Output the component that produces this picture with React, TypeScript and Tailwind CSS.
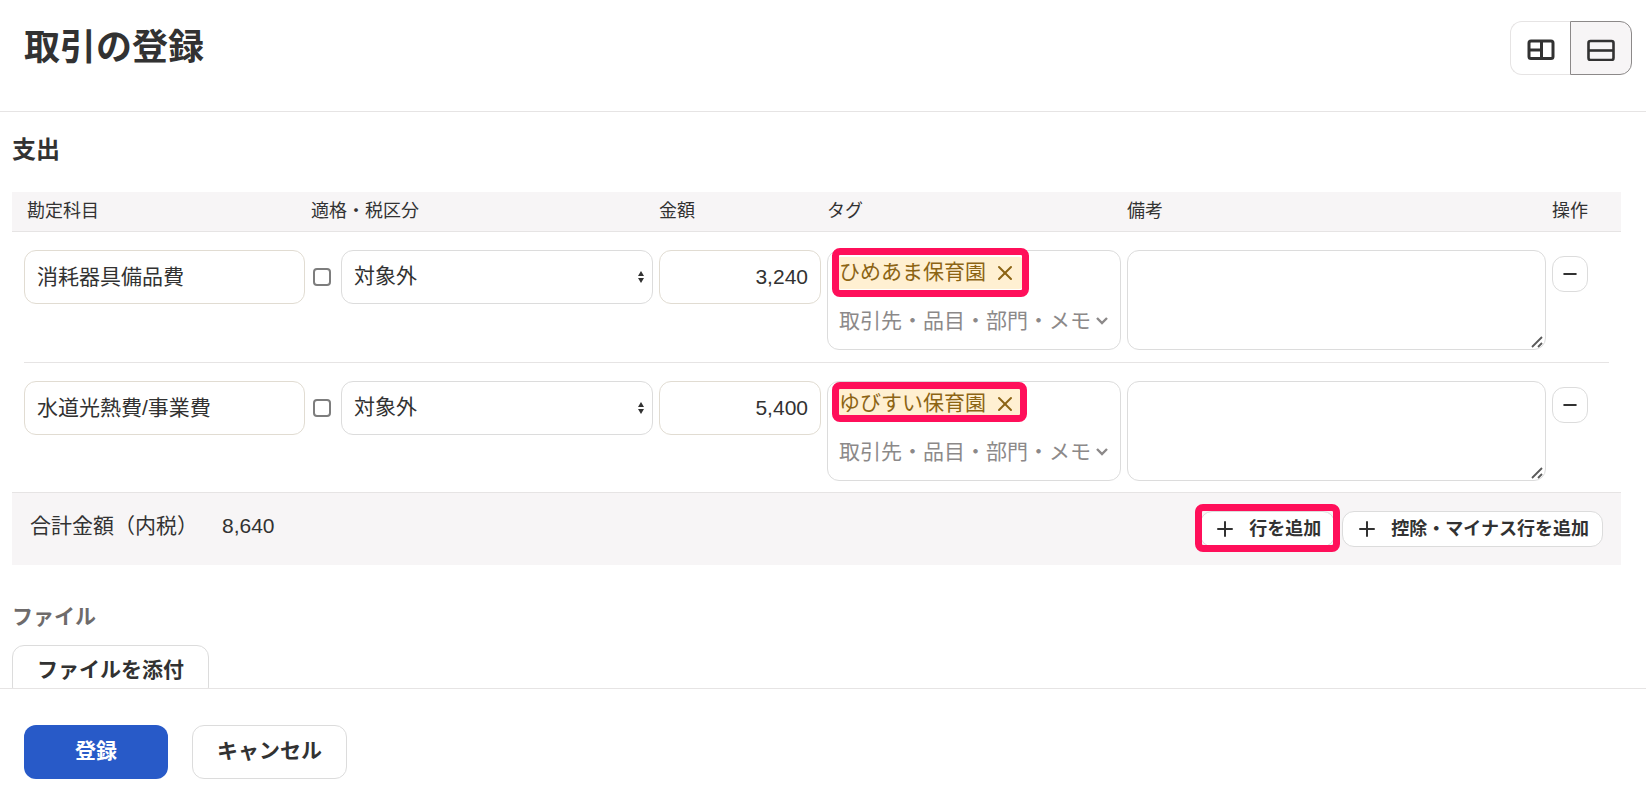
import { Minus, Plus, X } from 'lucide-react'

const rows = [
  {
    id: 1,
    account: '消耗器具備品費',
    tax: '対象外',
    amount: '3,240',
    tag: 'ひめあま保育園',
    frame: 'w-[197px] h-[49px] -top-[3px]',
  },
  {
    id: 2,
    account: '水道光熱費/事業費',
    tax: '対象外',
    amount: '5,400',
    tag: 'ゆびすい保育園',
    frame: 'w-[195px] h-10 top-0',
  },
]

const field = 'block h-[54px] w-full rounded-xl border bg-white px-3 text-[21px]'
const smallButton =
  'flex h-9 items-center gap-3 rounded-xl border border-[#dcdcdc] bg-white pr-[13px] pl-3 text-lg font-bold whitespace-nowrap'

function SplitIcon() {
  return (
    <svg width="28" height="22" viewBox="0 0 28 22" fill="none" stroke="#323232" strokeWidth="3">
      <rect x="2" y="2" width="24" height="17.5" rx="2" />
      <path d="M14.5 2v18" />
      <path d="M2 11h12" />
    </svg>
  )
}

function StackIcon() {
  return (
    <svg width="28" height="22" viewBox="0 0 28 22" fill="none" stroke="#323232" strokeWidth="2.6">
      <rect x="1.5" y="2" width="25" height="19" rx="2" />
      <path d="M2 11.5h24" />
    </svg>
  )
}

function SelectArrows() {
  return (
    <svg
      className="pointer-events-none absolute top-[21px] right-[9px]"
      width="6"
      height="12"
      viewBox="0 0 6 12"
      fill="#323232"
    >
      <path d="M3 0 6 5H0z" />
      <path d="M3 12 0 7h6z" />
    </svg>
  )
}

function Chevron() {
  return (
    <svg
      className="shrink-0"
      width="12"
      height="8"
      viewBox="0 0 12 8"
      fill="none"
      stroke="currentColor"
      strokeWidth="2.4"
    >
      <path d="m1 1 5 5 5-5" />
    </svg>
  )
}

function ResizeHandle() {
  return (
    <svg
      className="pointer-events-none absolute right-[3px] bottom-0.5"
      width="12"
      height="12"
      viewBox="0 0 12 12"
      fill="none"
      stroke="#5a5a5a"
      strokeWidth="1.8"
    >
      <path d="M1 11 11 1M7 11l4-4" />
    </svg>
  )
}

// Pink frame drawn over the parts that the guide points at
function Highlight({ className }: { className: string }) {
  return (
    <span
      className={`pointer-events-none absolute rounded-lg border-[7px] border-[#ff0f5a] ${className}`}
    />
  )
}

function EntryRow({ row, last }: { row: (typeof rows)[number]; last: boolean }) {
  return (
    <tr className="relative align-top">
      <td className="pt-[18px] pr-[3px] pl-3">
        <input
          aria-label="勘定科目"
          defaultValue={row.account}
          className={`${field} border-[#e1dcd2] pb-1`}
        />
      </td>
      <td className="px-[3px] pt-[18px]">
        <div className="flex items-center gap-2.5 pl-0.5">
          <input
            type="checkbox"
            aria-label="適格"
            className="size-[18px] shrink-0 appearance-none rounded border-2 border-[#7d7d7d] bg-white checked:bg-[#285ac8]"
          />
          <div className="relative flex-1">
            <select
              aria-label="税区分"
              defaultValue={row.tax}
              className={`${field} appearance-none border-[#dcdcdc] pb-0.5`}
            >
              <option>{row.tax}</option>
            </select>
            <SelectArrows />
          </div>
        </div>
      </td>
      <td className="px-[3px] pt-[18px]">
        <input
          aria-label="金額"
          defaultValue={row.amount}
          className={`${field} border-[#e1dcd2] text-right`}
        />
      </td>
      <td className={`px-[3px] pt-[18px] ${last ? 'pb-[11px]' : 'pb-[13px]'}`}>
        <div className="relative h-[100px] rounded-xl border border-[#dcdcdc] px-2 pt-1.5">
          <span className="flex h-8 w-fit items-center gap-[7px] rounded bg-[#fff0d2] pr-1.5 pl-[3px] text-[21px] leading-7 text-[#8c6414]">
            <span className="pb-0.5">{row.tag}</span>
            <button type="button" aria-label={`${row.tag}を削除`}>
              <X className="size-6" strokeWidth={2} />
            </button>
          </span>
          <label className="mt-3.5 flex h-9 items-center gap-1 pl-[3px] text-[#8c8989]">
            <input
              aria-label="タグ"
              placeholder="取引先・品目・部門・メモ"
              className="w-[253px] min-w-0 text-[21px] outline-none placeholder:text-[#8c8989]"
            />
            <Chevron />
          </label>
          <Highlight className={`left-1 ${row.frame}`} />
        </div>
      </td>
      <td className="px-[3px] pt-[18px]">
        <div className="relative">
          <textarea
            aria-label="備考"
            className="block h-[100px] w-full rounded-xl border border-[#dcdcdc] bg-white p-3 text-[21px] [&::-webkit-resizer]:bg-transparent"
          />
          <ResizeHandle />
        </div>
      </td>
      <td className="pt-6 pl-[3px]">
        <button
          type="button"
          aria-label="行を削除"
          className="flex size-9 items-center justify-center rounded-xl border border-[#dcdcdc] bg-white"
        >
          <Minus className="size-5" strokeWidth={2.4} />
        </button>
        {!last && <span className="absolute inset-x-3 bottom-0 h-px bg-[#e6e4e4]" />}
      </td>
    </tr>
  )
}

export default function App() {
  return (
    <div className="flex h-screen flex-col bg-white font-['Liberation_Sans','Noto_Sans_CJK_JP',sans-serif] text-[#323232]">
      <header className="flex h-28 shrink-0 items-start justify-between border-b border-[#e6e4e4] pt-[21px] pr-3.5 pl-6">
        <h1 className="text-4xl leading-[54px] font-bold">取引の登録</h1>
        <div className="flex">
          <button
            type="button"
            aria-label="左右に並べる"
            className="flex h-[54px] w-[60px] items-center justify-center rounded-l-xl border border-r-0 border-[#e6e4e4] bg-white pt-1"
          >
            <SplitIcon />
          </button>
          <button
            type="button"
            aria-label="上下に並べる"
            aria-pressed="true"
            className="flex h-[54px] w-[62px] items-center justify-center rounded-r-xl border border-[#8c8989] bg-[#f7f5f6] pt-1"
          >
            <StackIcon />
          </button>
        </div>
      </header>

      <main className="min-h-0 flex-1 overflow-hidden pr-[25px] pl-3">
        <h2 className="pt-5 text-2xl leading-9 font-bold">支出</h2>

        <table className="mt-6 w-full table-fixed border-separate border-spacing-0">
          <colgroup>
            <col className="w-[296px]" />
            <col className="w-[348px]" />
            <col className="w-[168px]" />
            <col className="w-[300px]" />
            <col />
            <col className="w-[72px]" />
          </colgroup>
          <thead>
            <tr className="h-10 bg-[#f7f5f6] text-left text-lg leading-9 *:border-b *:border-[#e6e4e4] *:p-0 *:pb-0.5 *:pl-[3px] *:font-normal">
              <th>
                <span className="pl-3">勘定科目</span>
              </th>
              <th>適格・税区分</th>
              <th>金額</th>
              <th>タグ</th>
              <th>備考</th>
              <th>操作</th>
            </tr>
          </thead>
          <tbody>
            {rows.map((row, i) => (
              <EntryRow key={row.id} row={row} last={i === rows.length - 1} />
            ))}
          </tbody>
        </table>

        <div className="flex items-start justify-between border-t border-[#e6e4e4] bg-[#f7f5f6] p-[18px]">
          <p className="flex gap-6 text-[21px] leading-[30px]">
            <span>合計金額（内税）</span>
            <span>8,640</span>
          </p>
          <div className="flex gap-[7px]">
            <div className="relative">
              <button type="button" className={smallButton}>
                <Plus className="size-6" strokeWidth={2} />
                行を追加
              </button>
              <Highlight className="-inset-x-[5px] -top-[7px] -bottom-[5px]" />
            </div>
            <button type="button" className={smallButton}>
              <Plus className="size-6" strokeWidth={2} />
              控除・マイナス行を追加
            </button>
          </div>
        </div>

        <h3 className="mt-9 text-[21px] leading-8 font-bold text-[#6e6b6b]">ファイル</h3>
        <button
          type="button"
          className="mt-3 h-[54px] rounded-xl border border-[#dcdcdc] px-6 pb-1 text-[21px] font-bold"
        >
          ファイルを添付
        </button>
      </main>

      <footer className="flex h-[115px] shrink-0 items-start gap-6 border-t border-[#e6e4e4] px-6 pt-9">
        <button
          type="button"
          className="h-[54px] w-36 rounded-xl bg-[#285ac8] pb-0.5 text-[21px] font-bold text-white"
        >
          登録
        </button>
        <button
          type="button"
          className="h-[54px] rounded-xl border border-[#dcdcdc] px-6 pb-0.5 text-[21px] font-bold"
        >
          キャンセル
        </button>
      </footer>
    </div>
  )
}
